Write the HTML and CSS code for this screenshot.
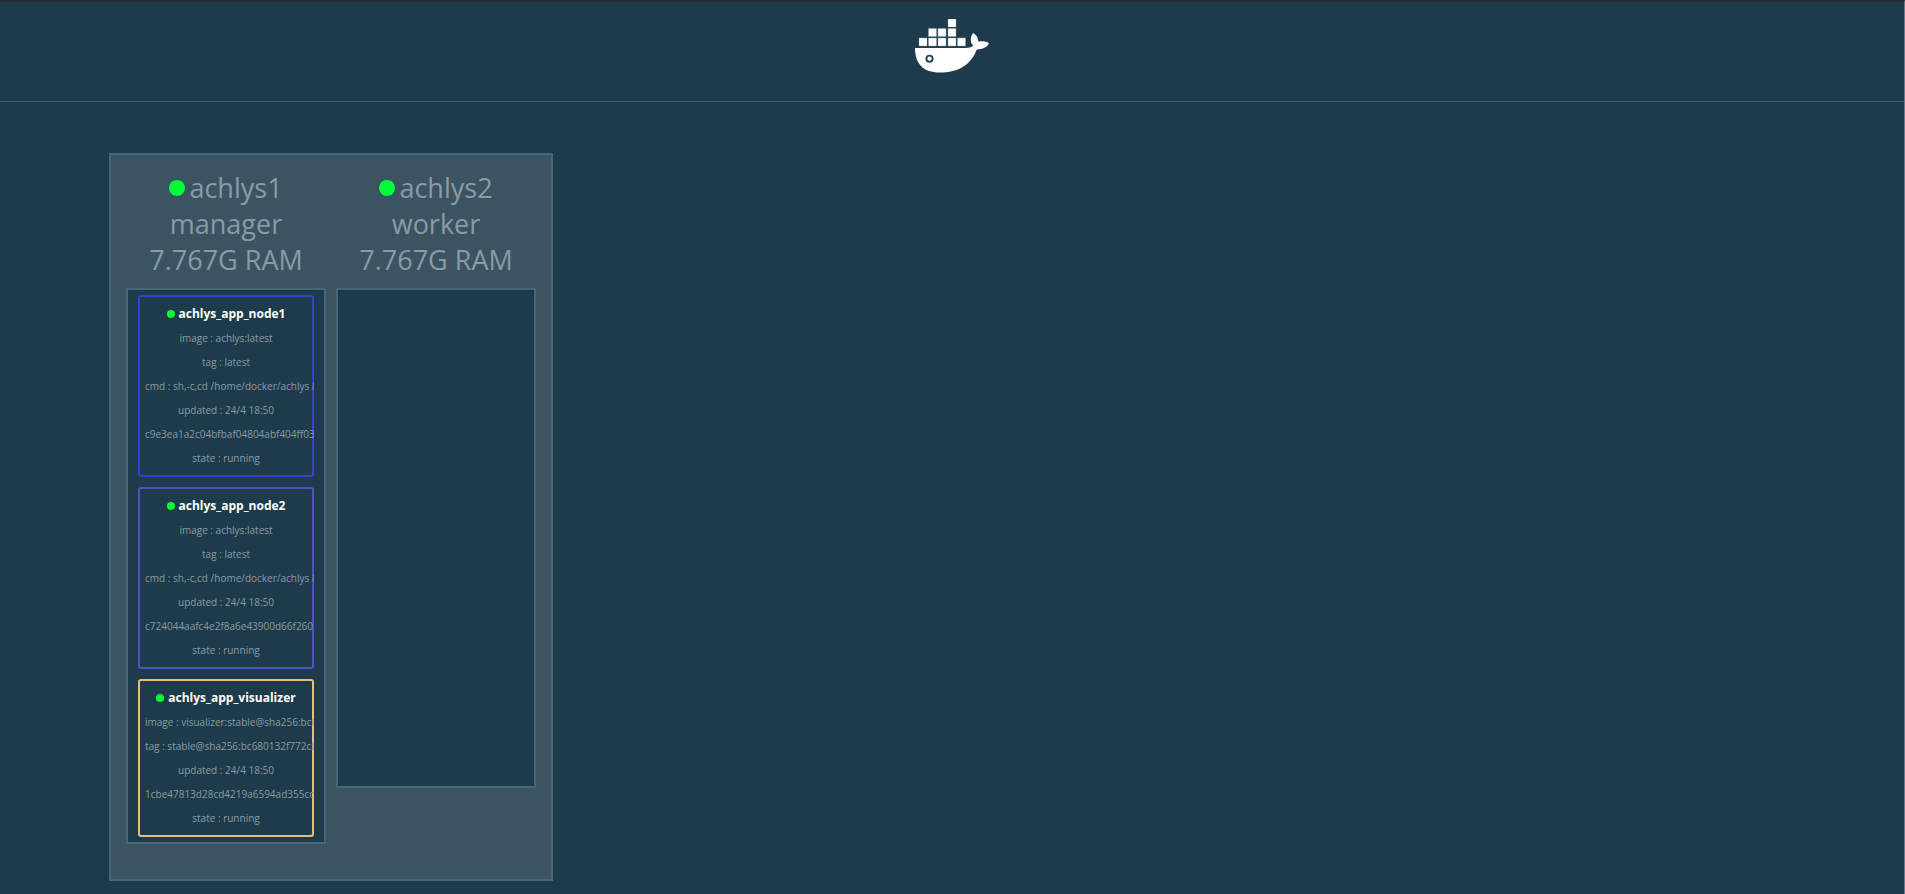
FILE: index.html
```html
<!DOCTYPE html>
<html lang="en">
<head>
<meta charset="utf-8">
<title>Visualizer</title>
<link rel="stylesheet" href="styles.css">
</head>
<body>
<header class="topbar">
<svg class="logo" viewBox="0 0 74 54" role="img" aria-label="Docker">
<g fill="#fff" stroke="#8fa0aa" stroke-width=".4">
<path d="M33 0h8v8h-8zM13.500 9.500h8v8h-8zM23 9.500h8v8h-8zM33 9.500h8v8h-8zM4 19h8v8H4zM13.500 19h8v8h-8zM23 19h8v8h-8zM33 19h8v8h-8zM42.500 19h8v8h-8z"/>
</g>
<path fill="#fff" d="M0 29h50c4 0 6.500-.8 8.200-2.200C55 23 55 18 58.200 14c3.800 2.500 5.300 5.500 5.200 8.800 3.600-.9 7.300-.6 10.600 1.400-2 4-6 6.200-12.300 6.200C56.500 45 44 53.500 24.500 53.500 8.500 53.500 0 45 0 29z"/>
<circle cx="14.500" cy="39.700" r="3.100" fill="#fff" stroke="#254356" stroke-width="1.900"/>
</svg>
</header>
<main class="board">
<div class="cluster">
<section class="node">
<h2 class="node-head"><span class="node-name"><i class="dot dot-large"></i>achlys1</span><span>manager</span><span>7.767G RAM</span></h2>
<div class="tasks">
<article class="task task-blue"><h3 class="task-name"><i class="dot"></i>achlys_app_node1</h3><p>image : achlys:latest</p><p>tag : latest</p><p>cmd : sh,-c,cd /home/docker/achlys &amp;</p><p>updated : 24/4 18:50</p><p>c9e3ea1a2c04bfbaf04804abf404ff03</p><p>state : running</p></article>
<article class="task task-violet"><h3 class="task-name"><i class="dot"></i>achlys_app_node2</h3><p>image : achlys:latest</p><p>tag : latest</p><p>cmd : sh,-c,cd /home/docker/achlys &amp;</p><p>updated : 24/4 18:50</p><p>c724044aafc4e2f8a6e43900d66f260</p><p>state : running</p></article>
<article class="task task-sand"><h3 class="task-name"><i class="dot"></i>achlys_app_visualizer</h3><p>image : visualizer:stable@sha256:bc6</p><p>tag : stable@sha256:bc680132f772cb</p><p>updated : 24/4 18:50</p><p>1cbe47813d28cd4219a6594ad355cc</p><p>state : running</p></article>
</div>
</section>
<section class="node">
<h2 class="node-head"><span class="node-name"><i class="dot dot-large"></i>achlys2</span><span>worker</span><span>7.767G RAM</span></h2>
<div class="tasks"></div>
</section>
</div>
</main>
</body>
</html>
```
FILE: styles.css
```css
* { box-sizing: border-box; }
html { background: #1e3b4b; }
body {
  margin: 0;
  color: #8b9ba5;
  font: 10px/24px "Open Sans", "Noto Sans", sans-serif;
  border-top: 2px solid #2b2b2f;
  border-right: 1px solid #667b87;
  min-height: 100vh;
}
h2, h3, p { margin: 0; font-weight: 400; }
.topbar {
  display: flex;
  justify-content: center;
  padding: 17px 0 28px;
  border-bottom: 1px solid #3b5967;
}
.logo { display: block; width: 74px; height: 54px; }
.board { padding: 51px 109px 13px; }
.cluster {
  display: flex;
  align-items: flex-start;
  gap: 10px;
  width: fit-content;
  padding: 15px 15px 35px;
  background: #3c5362;
  border: 2px solid #466779;
}
.node { width: 200px; }
.node-head {
  display: flex;
  flex-direction: column;
  align-items: center;
  margin-bottom: 10px;
  font-size: 27px;
  line-height: 36px;
}
.node-name { display: flex; align-items: center; gap: 4px; }
.dot { width: 8px; height: 8px; border-radius: 50%; background: #00ff37; }
.dot-large { width: 16px; height: 16px; }
.tasks {
  display: flex;
  flex-direction: column;
  gap: 10px;
  min-height: 500px;
  padding: 5px 10px;
  background: #1e3b4b;
  border: 2px solid #466779;
}
.task {
  padding: 5px;
  border: 2px solid;
  border-radius: 3px;
  text-align: center;
  white-space: nowrap;
  overflow: clip;
  overflow-clip-margin: border-box;
}
.task-blue { border-color: #3b3fce; }
.task-violet { border-color: #5152be; }
.task-sand { border-color: #e3c07f; }
.task-name {
  display: flex;
  align-items: center;
  justify-content: center;
  gap: 4px;
  color: #fff;
  font-size: 12px;
  font-weight: 700;
}
```
